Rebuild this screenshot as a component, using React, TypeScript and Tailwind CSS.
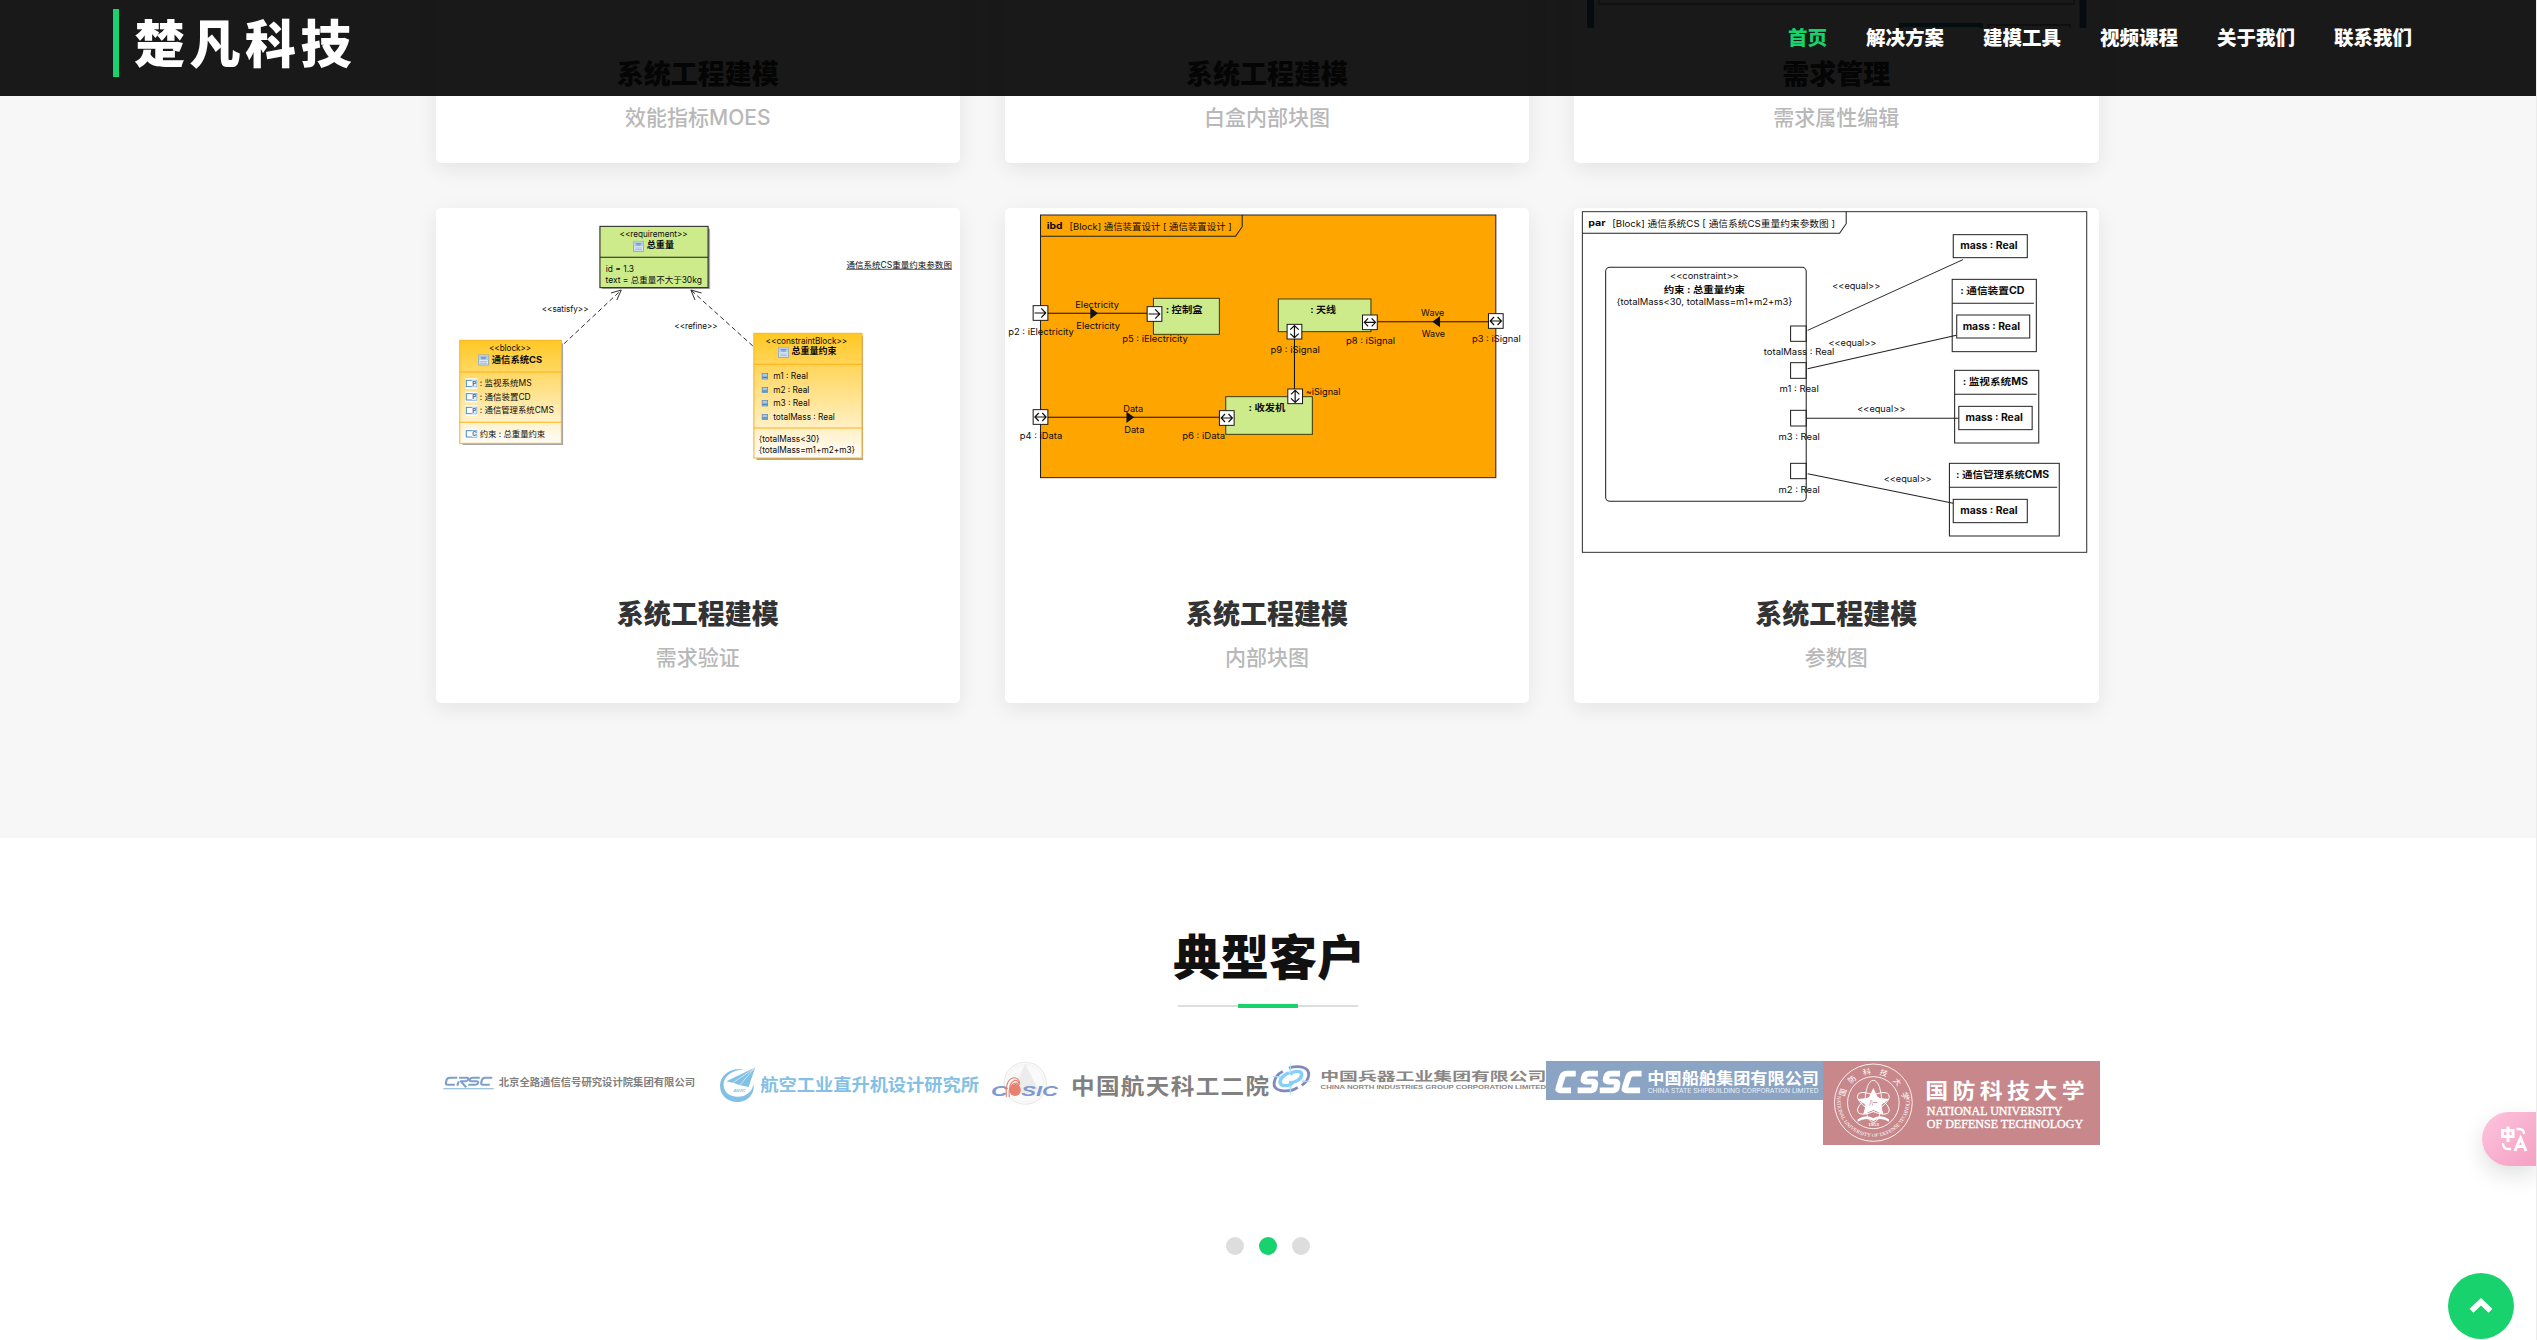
import type { ReactNode } from "react";

type TextProps = {
  x: number;
  y: number;
  s?: number;
  w?: number;
  b?: boolean;
  spaced?: boolean;
  fill?: string;
  className?: string;
  children: ReactNode;
};

/** Diagram label: x is the left edge, y the baseline, w the drawn width. */
function T({ x, y, s = 25, w, b, spaced, fill = "#0c0c0c", className, children }: TextProps) {
  return (
    <text
      x={x}
      y={y}
      fontSize={s}
      fontWeight={b ? 700 : 400}
      fill={fill}
      textLength={w}
      lengthAdjust={spaced ? "spacing" : "spacingAndGlyphs"}
      className={className ?? "font-['Inter','Noto_Sans_CJK_SC',sans-serif]"}
    >
      {children}
    </text>
  );
}

function DocIcon({ x, y }: { x: number; y: number }) {
  return (
    <g>
      <rect x={x} y={y} width="28" height="30" fill="#e3ecf6" stroke="#7c9fca" strokeWidth="2.5" />
      <rect x={x} y={y} width="28" height="15" fill="#b5cde8" />
      <path d={`M${x + 6} ${y + 7}h16M${x + 8} ${y + 11}h12`} stroke="#4a76ad" strokeWidth="2" />
      <path d={`M${x + 4} ${y + 20}h20M${x + 4} ${y + 25}h20`} stroke="#7fa3cd" strokeWidth="2" />
    </g>
  );
}

function PartIcon({ y, letter }: { y: number; letter: string }) {
  return (
    <g>
      <rect x="101" y={y} width="35" height="32" fill="#fff" />
      <rect x="104" y={y + 6} width="30" height="19" fill="#fff" stroke="#4b8ac6" strokeWidth="3" />
      <rect x="120" y={y + 6} width="14" height="19" fill="#e4effa" />
      <T x={121} y={y + 23} s={18} w={12} b fill="#3a78bd">{letter}</T>
    </g>
  );
}

function RequirementDiagram() {
  return (
    <svg width="525" height="360" role="img" aria-label="需求验证">
      <defs>
        <linearGradient id="amber" x1="0" y1="0" x2="0" y2="1">
          <stop offset="0" stopColor="#ffc823" />
          <stop offset="1" stopColor="#fffdf8" />
        </linearGradient>
      </defs>
      <g transform="translate(-5.5 -8) scale(.34439 .33333)">
        <rect x="498" y="86" width="314" height="181" fill="#aaa" />
        <rect x="492" y="79" width="314" height="184" fill="#cdeb8b" stroke="#1c1c1c" strokeWidth="3" />
        <path d="M492 172h314" stroke="#1c1c1c" strokeWidth="3" />
        <T x={549} y={111} w={198}>{"<<requirement>>"}</T>
        <DocIcon x={590} y={124} />
        <T x={628} y={143} s={26} w={79} b>总重量</T>
        <T x={509} y={215} w={82}>id = 1.3</T>
        <T x={508} y={248} w={280}>text = 总重量不大于30kg</T>

        <T x={1208} y={203} w={306}>通信系统CS重量约束参数图</T>
        <path d="M1208 208h306" stroke="#111" strokeWidth="2" />

        <g stroke="#222" strokeWidth="2.8" fill="none">
          <path d="M388 431L553 271M936 438L757 271" strokeDasharray="14 9" />
          <path d="M524 279L554 270L541 300M787 279L756 270L768 300" />
        </g>
        <T x={323} y={336} w={136}>{"<<satisfy>>"}</T>
        <T x={708} y={387} w={126}>{"<<refine>>"}</T>

        <rect x="93" y="430" width="292" height="305" fill="#a6a6a6" />
        <rect x="85" y="421" width="295" height="309" fill="url(#amber)" stroke="#ffb01c" strokeWidth="3" />
        <path d="M85 516h295M85 667h295" stroke="#ffae13" strokeWidth="3" />
        <T x={170} y={454} w={122}>{"<<block>>"}</T>
        <DocIcon x={140} y={465} />
        <T x={178} y={490} s={26} w={146} b>通信系统CS</T>
        <PartIcon y={535} letter="P" />
        <PartIcon y={575} letter="P" />
        <PartIcon y={616} letter="P" />
        <PartIcon y={686} letter="C" />
        <T x={143} y={559} w={151}>: 监视系统MS</T>
        <T x={143} y={599} w={148}>: 通信装置CD</T>
        <T x={143} y={640} w={215}>: 通信管理系统CMS</T>
        <T x={143} y={710} w={190}>约束 : 总重量约束</T>

        <rect x="947" y="408" width="309" height="372" fill="#a6a6a6" />
        <rect x="939" y="400" width="314" height="374" fill="url(#amber)" stroke="#ffb01c" strokeWidth="3" />
        <path d="M939 493h314M939 684h314" stroke="#ffae13" strokeWidth="3" />
        <T x={973} y={432} w={237}>{"<<constraintBlock>>"}</T>
        <DocIcon x={1011} y={442} />
        <T x={1048} y={463} s={26} w={131} b>总重量约束</T>
        {[529, 570, 610, 651].map((y) => (
          <g key={y}>
            <rect x="963" y={y - 8} width="16" height="16" fill="#a5c9e8" stroke="#5484b8" strokeWidth="2" />
            <path d={`M964 ${y + 3}h14`} stroke="#4a80bb" strokeWidth="4" />
          </g>
        ))}
        <T x={995} y={537} w={101}>m1 : Real</T>
        <T x={995} y={578} w={105}>m2 : Real</T>
        <T x={995} y={618} w={106}>m3 : Real</T>
        <T x={995} y={659} w={179}>totalMass : Real</T>
        <T x={953} y={726} w={177}>{"{totalMass<30}"}</T>
        <T x={953} y={759} w={280}>{"{totalMass=m1+m2+m3}"}</T>
      </g>
    </svg>
  );
}

function Port({ x, y, kind }: { x: number; y: number; kind: "r" | "h" | "v" }) {
  const arrows = {
    r: "M-17 0H14M2 -14L15 0L2 14",
    h: "M-15 0H15M-5 -12L-16 0L-5 12M5 -12L16 0L5 12",
    v: "M0 -17V17M-12 -6L0 -18L12 -6M-12 6L0 18L12 6",
  };
  return (
    <g transform={`translate(${x} ${y})`} fill="none" stroke="#111" strokeWidth="3.4">
      <rect x="-21" y="-22" width="42" height="44" fill="#fff" strokeWidth="2.8" />
      <path d={arrows[kind]} />
    </g>
  );
}

function BlockDiagram() {
  return (
    <svg width="525" height="360" role="img" aria-label="内部块图">
      <g transform="translate(-15 -8) scale(.35077 .33333)">
        <rect x="144" y="45" width="1298" height="788" fill="#ffa500" stroke="#222" strokeWidth="3" />
        <path d="M144 109H700L719 80V45" fill="none" stroke="#222" strokeWidth="3" />
        <T x={162} y={88} s={27} w={45} b>ibd</T>
        <T x={227} y={89} s={27} w={462}>[Block] 通信装置设计 [ 通信装置设计 ]</T>
        <g fill="#cdeb8b" stroke="#3c3c10" strokeWidth="3">
          <rect x="466" y="295" width="188" height="108" />
          <rect x="822" y="297" width="264" height="98" />
          <rect x="672" y="590" width="247" height="113" />
        </g>
        <path d="M165 340H448M165 652H654M868 417V566M1105 365H1421" stroke="#111" strokeWidth="3" />
        <path d="M286 323V357L308 340ZM389 635V669L411 652ZM1283 348V382L1261 365Z" fill="#111" />
        <T x={501} y={338} s={29} w={105} b>: 控制盒</T>
        <T x={913} y={340} s={29} w={74} b>: 天线</T>
        <T x={737} y={633} s={29} w={105} b>: 收发机</T>
        <T x={243} y={323} s={27} w={125}>Electricity</T>
        <T x={246} y={386} s={27} w={125}>Electricity</T>
        <T x={52} y={404} s={27} w={187}>p2 : iElectricity</T>
        <T x={377} y={426} s={27} w={187}>p5 : iElectricity</T>
        <T x={380} y={635} s={27} w={57}>Data</T>
        <T x={383} y={698} s={27} w={57}>Data</T>
        <T x={85} y={716} s={27} w={121}>p4 : iData</T>
        <T x={548} y={718} s={27} w={122}>p6 : iData</T>
        <T x={800} y={459} s={27} w={140}>p9 : iSignal</T>
        <T x={900} y={585} s={27} w={99}>~iSignal</T>
        <T x={1015} y={431} s={27} w={140}>p8 : iSignal</T>
        <T x={1229} y={348} s={27} w={66}>Wave</T>
        <T x={1231} y={411} s={27} w={66}>Wave</T>
        <T x={1374} y={426} s={27} w={139}>p3 : iSignal</T>
        <Port x={144} y={339} kind="r" />
        <Port x={469} y={342} kind="r" />
        <Port x={144} y={651} kind="h" />
        <Port x={675} y={654} kind="h" />
        <Port x={1083} y={367} kind="h" />
        <Port x={1442} y={363} kind="h" />
        <Port x={868} y={395} kind="v" />
        <Port x={870} y={589} kind="v" />
      </g>
    </svg>
  );
}

function ParametricDiagram() {
  return (
    <svg width="525" height="360" role="img" aria-label="参数图">
      <g transform="translate(-9 -8) scale(.34758 .33333)">
        <g fill="none" stroke="#222" strokeWidth="3">
          <rect x="50" y="35" width="1451" height="1022" stroke="#333" />
          <path d="M50 100H790L809 71V35" />
          <rect x="117" y="202" width="577" height="702" rx="12" />
          <rect x="649" y="378" width="45" height="46" />
          <rect x="649" y="488" width="45" height="47" />
          <rect x="649" y="631" width="45" height="47" />
          <rect x="649" y="790" width="45" height="46" />
          <path d="M698 391L1145 179M698 506L1126 406M694 655H1133M698 821L1117 910" />
          <rect x="1117" y="104" width="213" height="69" />
          <rect x="1114" y="238" width="242" height="217" />
          <rect x="1127" y="345" width="210" height="69" />
          <rect x="1121" y="511" width="242" height="218" />
          <rect x="1133" y="619" width="211" height="70" />
          <rect x="1106" y="790" width="316" height="218" />
          <rect x="1117" y="898" width="213" height="70" />
          <path d="M1114 310H1349M1121 583H1357M1106 862H1416" />
        </g>
        <T x={67} y={79} s={27} w={50} b>par</T>
        <T x={136} y={80} s={27} w={641}>[Block] 通信系统CS [ 通信系统CS重量约束参数图 ]</T>
        <T x={302} y={238} s={27} w={198}>{"<<constraint>>"}</T>
        <T x={284} y={279} s={29} w={234} b>约束 : 总重量约束</T>
        <T x={148} y={315} s={27} w={506}>{"{totalMass<30, totalMass=m1+m2+m3}"}</T>
        <T x={572} y={466} s={27} w={203}>totalMass : Real</T>
        <T x={617} y={576} s={27} w={113}>m1 : Real</T>
        <T x={614} y={719} s={27} w={119}>m3 : Real</T>
        <T x={614} y={878} s={27} w={119}>m2 : Real</T>
        <T x={769} y={266} s={27} w={138}>{"<<equal>>"}</T>
        <T x={758} y={437} s={27} w={138}>{"<<equal>>"}</T>
        <T x={841} y={637} s={27} w={138}>{"<<equal>>"}</T>
        <T x={917} y={847} s={27} w={138}>{"<<equal>>"}</T>
        <T x={1137} y={148} s={29} w={165} b>mass : Real</T>
        <T x={1144} y={389} s={29} w={165} b>mass : Real</T>
        <T x={1152} y={662} s={29} w={165} b>mass : Real</T>
        <T x={1137} y={942} s={29} w={165} b>mass : Real</T>
        <T x={1137} y={281} s={29} w={185} b>: 通信装置CD</T>
        <T x={1144} y={555} s={29} w={188} b>: 监视系统MS</T>
        <T x={1125} y={834} s={29} w={268} b>: 通信管理系统CMS</T>
      </g>
    </svg>
  );
}

function DialogPicture() {
  return (
    <svg width="525" height="360" aria-hidden="true">
      <path d="M16.500 0V360M509 0V360" stroke="#3f6ba8" strokeWidth="7" />
      <path d="M25 0V336H500V0" fill="none" stroke="#999" strokeWidth="1.5" />
      <path d="M327 360V357H407V360" fill="none" stroke="#1b8aa0" strokeWidth="4" />
      <path d="M414 360V357H496V360" fill="none" stroke="#999" strokeWidth="2" />
    </svg>
  );
}

function Card({ title, subtitle, children }: { title: string; subtitle: string; children?: ReactNode }) {
  return (
    <article className="h-[495px] overflow-hidden rounded-[5px] bg-white text-center shadow-[0_6px_21px_rgba(0,0,0,0.08)]">
      <div className="h-[360px]">{children}</div>
      <h4 className="mt-[30px] text-[27px] leading-8 font-black text-[#333]">{title}</h4>
      <p className="mt-[13px] font-['Inter','Noto_Sans_CJK_SC',sans-serif] text-[21px] leading-[30px] font-medium text-[#b8b8b8]">{subtitle}</p>
    </article>
  );
}

const CJK = "font-['Noto_Sans_CJK_SC',sans-serif]";

function LogoCrsc() {
  return (
    <svg width="277.5" height="60" className="shrink-0 overflow-visible" role="img" aria-label="CRSC">
      <g transform="translate(-5.5 -21) scale(.35714 .33333)">
        <g fill="none" stroke="#7f9fcb" strokeWidth="6" strokeLinejoin="round">
          <path d="M75 113H54Q47 113 45 120L43 129Q42 134 48 134H68" />
          <path d="M80 113H102Q107 113 105 119Q104 124 97 124H85L100 142M79 124L75 137" />
          <path d="M138 113H118Q111 113 110 119Q109 124 115 124H129Q135 124 133 129Q132 134 126 134H106" />
          <path d="M173 113H153Q146 113 144 120L142 129Q141 134 147 134H166" />
        </g>
        <path d="M36 146H177" stroke="#7fb0d6" strokeWidth="3" />
        <T x={191} y={138} s={30} w={550} fill="#808080" className={CJK} b>北京全路通信信号研究设计院集团有限公司</T>
      </g>
    </svg>
  );
}

function LogoAvic() {
  return (
    <svg width="277.5" height="60" className="shrink-0 overflow-visible" role="img" aria-label="AVIC">
      <g transform="translate(-283 -21) scale(.35714 .33333)">
        <path d="M880 88C842 82 812 104 812 138C812 166 834 186 860 186C889 186 910 163 906 132C901 158 884 170 862 170C838 170 822 155 822 134C822 108 846 91 880 88Z" fill="#82c1e5" />
        <path d="M911 82L830 124L850 129L866 135L892 141Z" fill="#82c1e5" />
        <path d="M909 84L849 128M909 84L867 136" stroke="#fff" strokeWidth="1.6" />
        <T x={849} y={156} s={12} w={34} b fill="#82c1e5" className="italic font-['Inter',sans-serif]">AVIC</T>
        <T x={925} y={154} s={52} w={612} b fill="#82c1e5" className={CJK}>航空工业直升机设计研究所</T>
      </g>
    </svg>
  );
}

function LogoCasic() {
  return (
    <svg width="277.5" height="60" className="shrink-0 overflow-visible" role="img" aria-label="CASIC">
      <g transform="translate(-10.5 -21) scale(.36352 .33333)">
        <ellipse cx="123" cy="130" rx="58" ry="63" fill="#fafafa" stroke="#e8e8e8" strokeWidth="3" />
        <ellipse cx="123" cy="130" rx="51" ry="56" fill="none" stroke="#efefef" strokeWidth="2" />
        <path d="M123 72L158 148Q124 176 88 150Z" fill="#ececec" />
        <T x={29} y={168} s={43} w={46} b fill="#7d99cf" className="italic font-['Liberation_Sans',sans-serif]">C</T>
        <T x={112} y={168} s={43} w={101} b fill="#7d99cf" className="italic font-['Liberation_Sans',sans-serif]">SIC</T>
        <ellipse cx="95" cy="150" rx="16" ry="18" fill="#e8806f" />
        <path d="M71 171Q68 113 94 113Q106 114 108 130M79 171Q77 124 96 121Q105 122 107 135M84 145Q86 130 97 129Q104 130 105 140" fill="none" stroke="#e8806f" strokeWidth="3" />
        <T x={249} y={161} s={65} w={545} spaced b fill="#808080" className={CJK}>中国航天科工二院</T>
      </g>
    </svg>
  );
}

function LogoNorinco() {
  return (
    <svg width="277.5" height="60" className="shrink-0 overflow-visible" role="img" aria-label="NORINCO">
      <g transform="translate(-288 -21) scale(.36352 .33333)">
        <g fill="none" strokeLinecap="butt">
          <path d="M833 94C805 110 800 145 826 151C844 155 862 151 874 142" stroke="#8189bd" strokeWidth="8" />
          <path d="M850 84C880 74 907 83 904 107C902 120 894 130 885 136" stroke="#8189bd" strokeWidth="8" />
          <path d="M850 98C828 108 817 130 833 136C845 139 858 134 861 126" stroke="#86cffa" strokeWidth="10" />
          <path d="M853 103C862 92 886 90 885 104C884 119 866 128 850 128" stroke="#86cffa" strokeWidth="10" />
        </g>
        <path d="M854 65L857 98H851ZM854 169L857 137H851ZM797 110L828 107V113ZM917 124L885 121V127Z" fill="#a6defc" />
        <T x={936} y={123} s={37} w={622} b fill="#8b8785" className={CJK}>中国兵器工业集团有限公司</T>
        <T x={937} y={148} s={15} w={620} b fill="#8b8785" className="font-['Liberation_Sans',sans-serif]">CHINA NORTH INDUSTRIES GROUP CORPORATION LIMITED</T>
      </g>
    </svg>
  );
}

function LogoCssc() {
  return (
    <svg width="277.5" height="39" className="shrink-0 overflow-visible bg-[#8ba4c4]" role="img" aria-label="CSSC">
      <g transform="translate(-5.5 -21) scale(.36352 .33333)">
        <g fill="none" stroke="#fff" strokeWidth="17" strokeLinejoin="round">
          <path d="M97 101H74Q63 101 60 110L50 144Q47 151 56 151H84" />
          <path d="M158 101H133Q123 101 121 109L119 117Q117 125 126 125H144Q152 125 150 133L148 144Q146 151 139 151H102" />
          <path d="M219 101H194Q184 101 182 109L180 117Q178 125 187 125H205Q213 125 211 133L209 144Q207 151 200 151H163" />
          <path d="M278 101H256Q245 101 242 110L232 144Q229 151 238 151H274" />
        </g>
        <T x={294} y={132} s={49} w={472} b fill="#fff" className={CJK}>中国船舶集团有限公司</T>
        <T x={295} y={158} s={17} w={470} fill="#eef2f7" className="font-['Inter',sans-serif]">CHINA STATE SHIPBUILDING CORPORATION LIMITED</T>
      </g>
    </svg>
  );
}

function LogoNudt() {
  return (
    <svg width="277" height="84" className="shrink-0 bg-[#c8878a]" role="img" aria-label="NUDT">
      <defs>
        <path id="seal-top" d="M836 188A81 86 0 0 1 998 188" />
        <path id="seal-bottom" d="M819 160A100 109 0 1 0 1015 160" />
      </defs>
      <g transform="translate(-283 -21) scale(.36352 .33333)">
        <g fill="none" stroke="#fff" strokeWidth="2.5">
          <ellipse cx="917" cy="188" rx="107" ry="116" />
          <ellipse cx="917" cy="188" rx="71" ry="78" />
          <ellipse cx="917" cy="184" rx="23" ry="63" />
          <ellipse cx="917" cy="190" rx="22" ry="50" transform="rotate(58 917 190)" />
          <ellipse cx="917" cy="190" rx="22" ry="50" transform="rotate(-58 917 190)" />
        </g>
        <path d="M917 144L930 174L961 177L938 195L945 224L917 209L889 224L896 195L873 177L904 174Z" fill="#fff" />
        <path d="M874 238Q897 221 917 235Q937 221 960 238V245Q937 230 917 243Q897 230 874 245Z" fill="#fff" />
        <T x={906} y={196} s={22} w={22} b fill="#c8878a" className={CJK}>八一</T>
        <T x={903} y={258} s={12} w={29} b fill="#fff" className="font-['Liberation_Serif',serif]">1953</T>
        <text fontSize="22" fontWeight="400" fill="#fff" className={CJK}>
          <textPath href="#seal-top" startOffset="18" textLength="236">国防科技大学</textPath>
        </text>
        <text fontSize="15" fontWeight="400" fill="#fff" className="font-['Liberation_Serif',serif]">
          <textPath href="#seal-bottom" startOffset="8" textLength="370" lengthAdjust="spacingAndGlyphs">NATIONAL UNIVERSITY OF DEFENSE TECHNOLOGY</textPath>
        </text>
        <T x={1060} y={174} s={63} w={438} spaced b fill="#fff" className={CJK}>国防科技大学</T>
        <T x={1064} y={224} s={35} w={373} fill="#fff" className="stroke-white stroke-1 font-['Liberation_Serif',serif]">NATIONAL UNIVERSITY</T>
        <T x={1064} y={263} s={35} w={430} fill="#fff" className="stroke-white stroke-1 font-['Liberation_Serif',serif]">OF DEFENSE TECHNOLOGY</T>
      </g>
    </svg>
  );
}

const NAV = ["首页", "解决方案", "建模工具", "视频课程", "关于我们", "联系我们"];

export default function App() {
  return (
    <div className="relative h-[1340px] w-[2537px] overflow-hidden border-r border-[#ececec] bg-white font-['Open_Sans','Noto_Sans_CJK_SC',sans-serif]">
      <header className="absolute inset-x-0 top-0 z-10 flex h-24 items-start justify-between bg-black/90 pr-[124px] pl-[113px]">
        <a className="mt-[9px] flex h-[68px] items-center border-l-6 border-[#18d26e] pl-[15px] text-[51px] leading-none font-black tracking-[4.5px] text-white">
          楚凡科技
        </a>
        <nav className="mt-6 flex gap-[39px] text-[19.5px] leading-7 font-black text-white">
          {NAV.map((item, i) => (
            <a key={item} className={i === 0 ? "text-[#18d26e]" : ""}>{item}</a>
          ))}
        </nav>
      </header>

      <section className="h-[838px] overflow-hidden bg-[#f7f7f7]">
        <div className="-mt-[332px] ml-[435.5px] grid w-[1663px] grid-cols-3 gap-x-[44.5px] gap-y-[45px]">
          <Card title="系统工程建模" subtitle="效能指标MOES" />
          <Card title="系统工程建模" subtitle="白盒内部块图" />
          <Card title="需求管理" subtitle="需求属性编辑"><DialogPicture /></Card>
          <Card title="系统工程建模" subtitle="需求验证"><RequirementDiagram /></Card>
          <Card title="系统工程建模" subtitle="内部块图"><BlockDiagram /></Card>
          <Card title="系统工程建模" subtitle="参数图"><ParametricDiagram /></Card>
        </div>
      </section>

      <section className="flex flex-col items-center pt-[90px]">
        <h3 className="ml-0.5 text-5xl leading-[58px] font-black text-[#111]">典型客户</h3>
        <div className="mt-[18px] flex h-1 w-[180px] items-center">
          <span className="h-0.5 w-[60px] bg-[#ddd]" />
          <span className="h-1 w-[60px] bg-[#18d26e]" />
          <span className="h-0.5 w-[60px] bg-[#ddd]" />
        </div>
        <div className="mt-[53px] flex h-[84px] w-[1665px] items-start">
          <LogoCrsc />
          <LogoAvic />
          <LogoCasic />
          <LogoNorinco />
          <LogoCssc />
          <LogoNudt />
        </div>
        <div className="mt-[92px] flex gap-[15px]">
          <span className="size-[18px] rounded-full bg-[#ddd]" />
          <span className="size-[18px] rounded-full bg-[#18d26e]" />
          <span className="size-[18px] rounded-full bg-[#ddd]" />
        </div>
      </section>

      <button className="absolute top-[1112px] right-0 flex h-[54px] w-[54px] items-center rounded-l-full bg-linear-to-br from-[#fdc4dc] to-[#f4a0c4] pl-[18px] shadow-[0_9px_22px_rgba(0,20,15,0.13)]">
        <svg width="28" height="28" viewBox="0 0 28 28" fill="none" stroke="#fff" strokeWidth="3" aria-hidden="true">
          <path d="M2.500 5.500H13V11.500H2.500ZM8 1.500V17" />
          <path d="M16.500 4H19Q24 4 24 9M3 18Q3 24 8 24H11" strokeWidth="2.4" />
          <path d="M15 26L20.500 13L26 26M17 21.500H24" />
        </svg>
      </button>

      <button className="absolute top-[1273px] right-[22px] flex size-[66px] items-center justify-center rounded-full bg-[#18d26e]">
        <svg width="24" height="16" viewBox="0 0 24 16" fill="none" stroke="#fff" strokeWidth="5.500" aria-hidden="true">
          <path d="M2.500 12.800L12 3.800L21.500 12.800" />
        </svg>
      </button>
    </div>
  );
}
